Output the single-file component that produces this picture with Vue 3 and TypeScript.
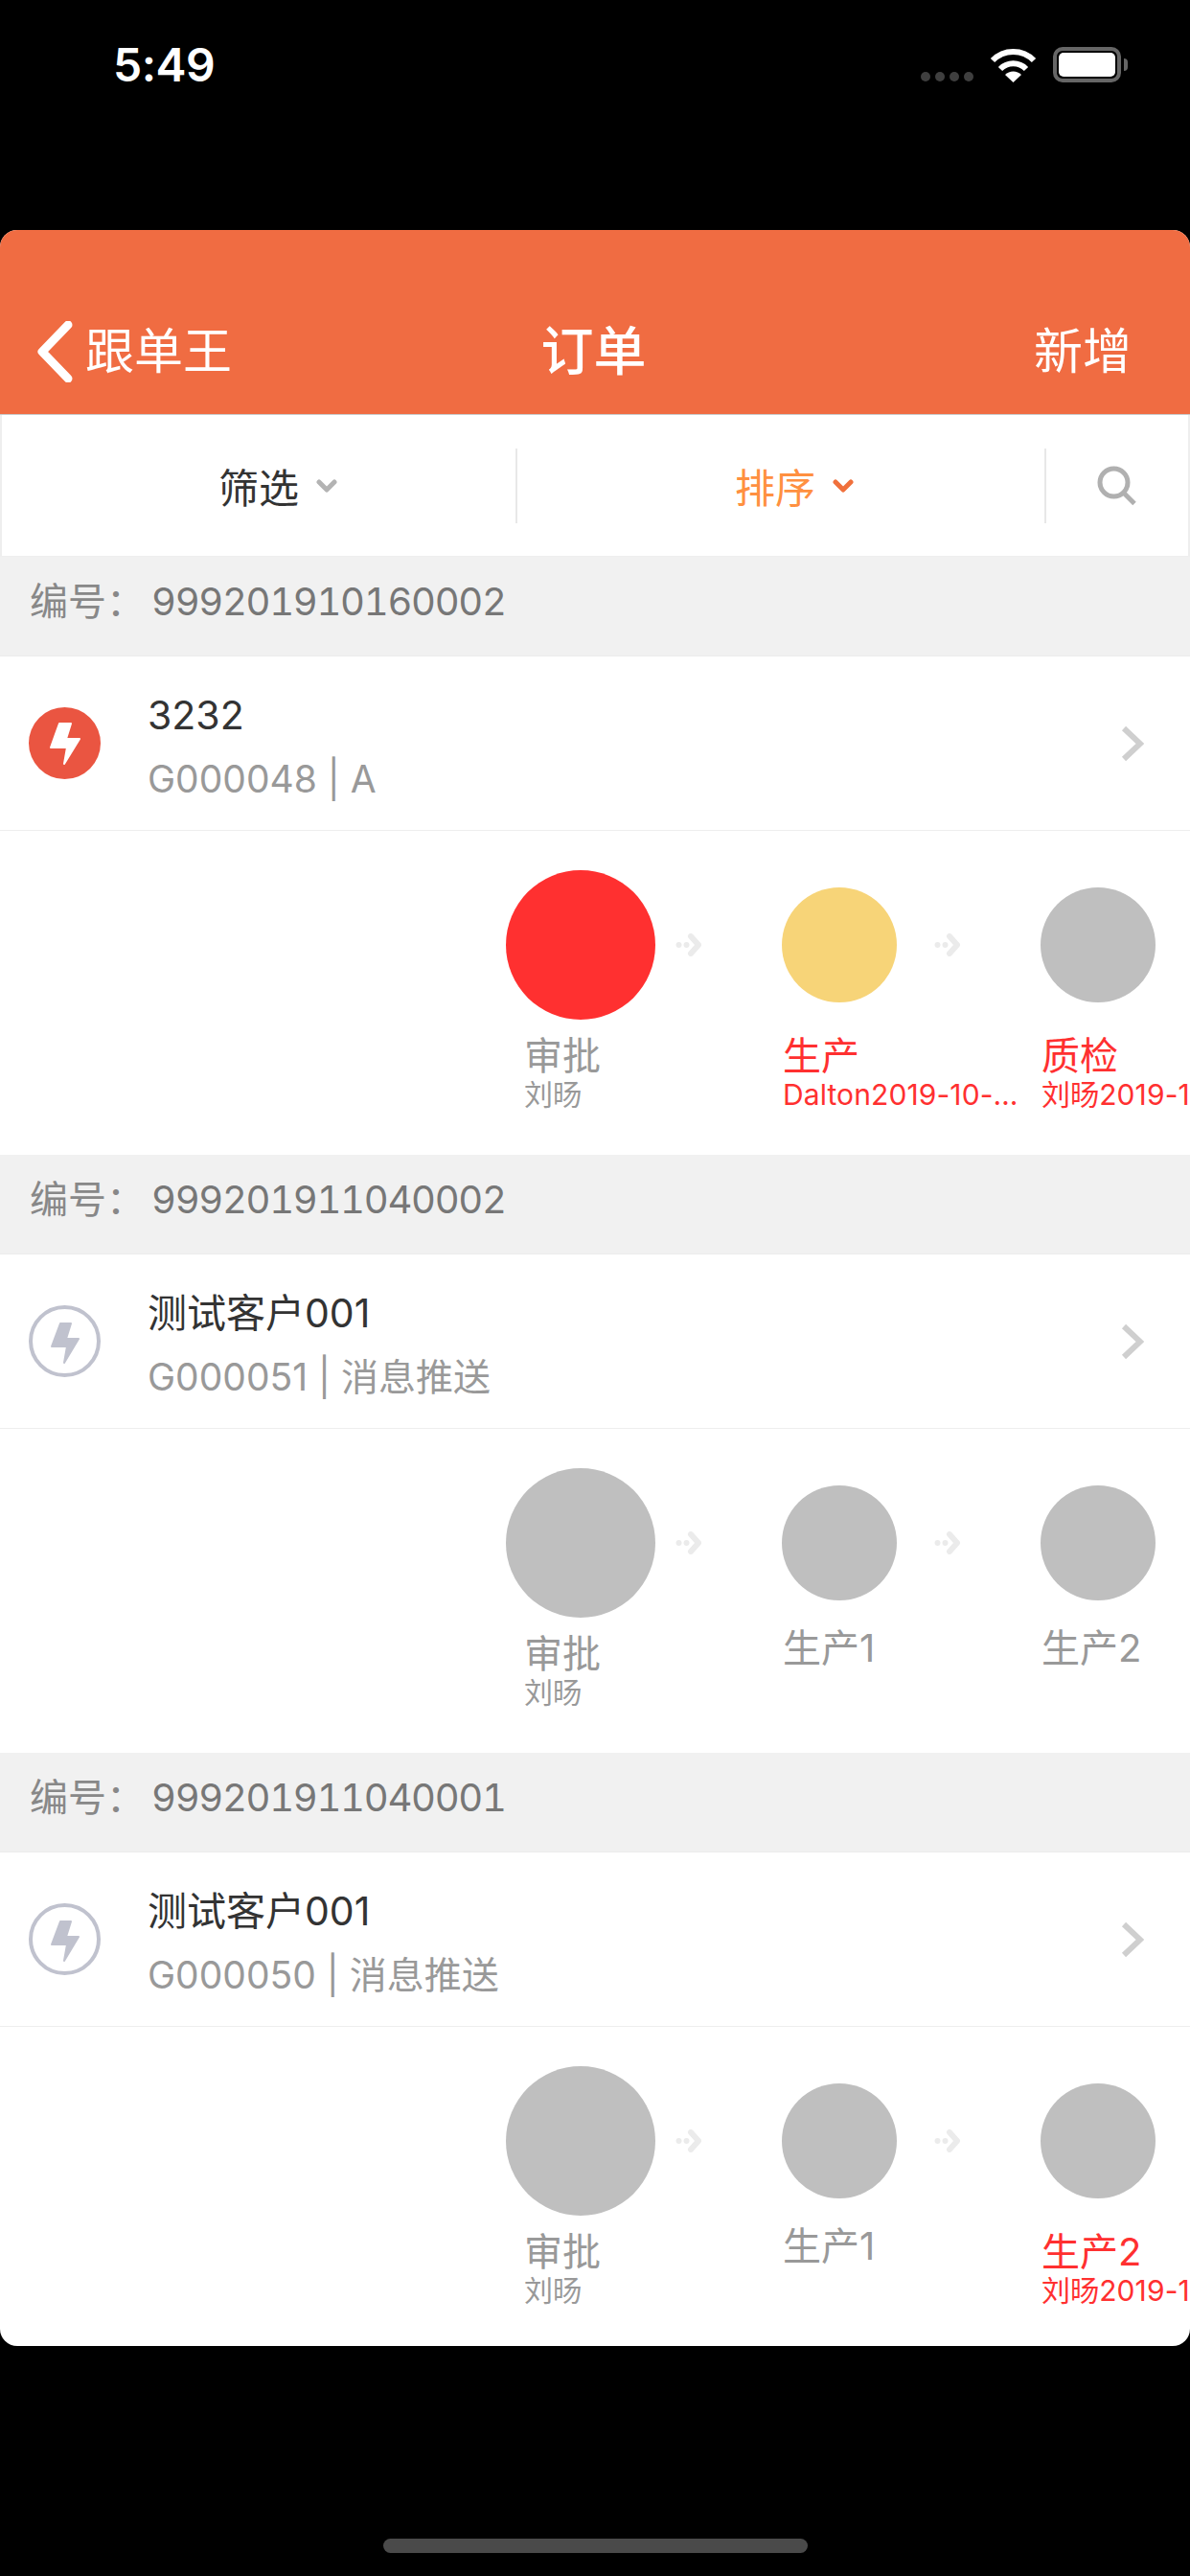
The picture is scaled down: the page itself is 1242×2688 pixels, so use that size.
<script setup lang="ts">
interface Step {
  name: string;
  who?: string;
  color: 'red' | 'yellow' | 'gray';
  big?: boolean;
  alert?: boolean;
}

interface Order {
  no: string;
  title: string;
  sub: string;
  urgent: boolean;
  steps: Step[];
}

const orders: Order[] = [
  {
    no: '999201910160002',
    title: '3232',
    sub: 'G000048 | A',
    urgent: true,
    steps: [
      { name: '审批', who: '刘旸', color: 'red', big: true },
      { name: '生产', who: 'Dalton2019-10-16', color: 'yellow', alert: true },
      { name: '质检', who: '刘旸2019-10-16', color: 'gray', alert: true },
    ],
  },
  {
    no: '999201911040002',
    title: '测试客户001',
    sub: 'G000051 | 消息推送',
    urgent: false,
    steps: [
      { name: '审批', who: '刘旸', color: 'gray', big: true },
      { name: '生产1', color: 'gray' },
      { name: '生产2', color: 'gray' },
    ],
  },
  {
    no: '999201911040001',
    title: '测试客户001',
    sub: 'G000050 | 消息推送',
    urgent: false,
    steps: [
      { name: '审批', who: '刘旸', color: 'gray', big: true },
      { name: '生产1', color: 'gray' },
      { name: '生产2', who: '刘旸2019-11-04', color: 'gray', alert: true },
    ],
  },
];
</script>

<template>
  <div class="screen">
    <div class="status">
      <span class="time">5:49</span>
      <div class="status-icons">
        <div class="signal"><i></i><i></i><i></i><i></i></div>
        <svg class="wifi" width="49" height="37" viewBox="0 0 49 37">
          <path d="M3 14 A30 30 0 0 1 46 14" fill="none" stroke="#fff" stroke-width="6" />
          <path d="M11 23 A19 19 0 0 1 38 23" fill="none" stroke="#fff" stroke-width="6" />
          <path d="M24.5 37 L16 29 A12 12 0 0 1 33 29 Z" fill="#fff" />
        </svg>
        <div class="battery"><div class="battery-fill"></div></div>
        <div class="battery-tip"></div>
      </div>
    </div>

    <div class="card">
      <div class="nav">
        <div class="nav-back">
          <svg width="38" height="64" viewBox="0 0 38 64">
            <path d="M33 4 L6 32 L33 60" fill="none" stroke="#fff" stroke-width="9" stroke-linecap="round" stroke-linejoin="round" />
          </svg>
          <span>跟单王</span>
        </div>
        <div class="nav-title">订单</div>
        <div class="nav-add">新增</div>
      </div>

      <div class="filters">
        <div class="filter filter-a">
          <span>筛选</span>
          <svg width="22" height="14" viewBox="0 0 22 14">
            <path d="M3 3 L11 11 L19 3" fill="none" stroke="#b3b3b3" stroke-width="5" stroke-linecap="round" stroke-linejoin="round" />
          </svg>
        </div>
        <div class="filter filter-b active">
          <span>排序</span>
          <svg width="22" height="14" viewBox="0 0 22 14">
            <path d="M3 3 L11 11 L19 3" fill="none" stroke="#f0703c" stroke-width="5" stroke-linecap="round" stroke-linejoin="round" />
          </svg>
        </div>
        <div class="filter filter-c">
          <svg width="42" height="42" viewBox="0 0 42 42">
            <circle cx="17.5" cy="17.5" r="14.5" fill="none" stroke="#b0b0b0" stroke-width="5" />
            <path d="M27.5 28 L39 39.5" fill="none" stroke="#b0b0b0" stroke-width="5" />
          </svg>
        </div>
      </div>

      <section v-for="order in orders" :key="order.no" class="order">
        <div class="order-no"><span class="no-label">编号：</span><span>{{ order.no }}</span></div>
        <div class="order-row">
          <svg class="bolt" width="75" height="75" viewBox="0 0 75 75">
            <template v-if="order.urgent">
              <circle cx="37.5" cy="37.5" r="37.5" fill="#ea5541" />
              <path d="M32 17 H44 L39 33 H53 L37 59 L40 42 H23 Z" fill="#fff" stroke="#fff" stroke-width="2" stroke-linejoin="round" />
            </template>
            <template v-else>
              <circle cx="37.5" cy="37.5" r="35.5" fill="none" stroke="#c0c2ce" stroke-width="4" />
              <path d="M33 19 H44 L39 35 H52 L37 60 L40 43 H24 Z" fill="#c0c2ce" stroke="#c0c2ce" stroke-width="2" stroke-linejoin="round" />
            </template>
          </svg>
          <div class="order-info">
            <div class="order-title">{{ order.title }}</div>
            <div class="order-sub">{{ order.sub }}</div>
          </div>
          <svg class="row-arrow" width="24" height="38" viewBox="0 0 24 38">
            <path d="M3 3 L20 19 L3 35" fill="none" stroke="#cfcfcf" stroke-width="6" />
          </svg>
        </div>
        <div class="steps">
          <template v-for="(step, i) in order.steps" :key="i">
            <svg v-if="i > 0" class="step-arrow" width="27" height="24" viewBox="0 0 27 24">
              <circle cx="3.5" cy="12" r="3" fill="#ebebeb" />
              <circle cx="11.5" cy="12" r="3" fill="#ebebeb" />
              <path d="M16 3 L24 12 L16 21" fill="none" stroke="#ebebeb" stroke-width="6" stroke-linecap="round" stroke-linejoin="round" />
            </svg>
            <div class="step">
              <div class="dot-wrap">
                <div class="dot" :class="[step.color, { big: step.big }]"></div>
              </div>
              <div class="step-text" :class="{ alert: step.alert, solo: !step.who }">
                <div class="step-name">{{ step.name }}</div>
                <div v-if="step.who" class="step-who">{{ step.who }}</div>
              </div>
            </div>
          </template>
        </div>
      </section>
    </div>

    <div class="home-bar"></div>
  </div>
</template>

<style scoped>
.screen {
  width: 1242px;
  height: 2688px;
  background: #000;
  overflow: hidden;
  font-family: Inter, "Noto Sans CJK SC", sans-serif;
}
.status {
  height: 240px;
  box-sizing: border-box;
  padding: 49px 65px 0 118px;
  display: flex;
  justify-content: space-between;
  align-items: flex-start;
  color: #fff;
}
.time {
  font-size: 48px;
  font-weight: 600;
  line-height: 38px;
  letter-spacing: -0.5px;
}
.status-icons {
  display: flex;
  align-items: flex-start;
}
.signal {
  display: flex;
  gap: 5px;
  margin: 26px 17px 0 0;
}
.signal i {
  width: 10px;
  height: 10px;
  border-radius: 5px;
  background: #3f3f3f;
}
.battery {
  width: 71px;
  height: 37px;
  box-sizing: border-box;
  margin-left: 17px;
  padding: 2px;
  border: 4px solid #666;
  border-radius: 10px;
}
.battery-fill {
  height: 100%;
  background: #fff;
  border-radius: 5px;
}
.battery-tip {
  width: 4px;
  height: 13px;
  margin: 12px 0 0 3px;
  background: #666;
  border-radius: 0 4px 4px 0;
}

.card {
  height: 2208px;
  background: #fff;
  border-radius: 18px;
  overflow: hidden;
}
.nav {
  height: 193px;
  box-sizing: border-box;
  padding: 95px 61px 0 38px;
  display: flex;
  justify-content: space-between;
  background: #f06c42;
  border-bottom: 1px solid #c9c9c9;
  color: #fff;
  font-size: 51px;
  line-height: 64px;
}
.nav-back {
  display: flex;
  align-items: center;
  gap: 13px;
  height: 64px;
}
.nav-title {
  font-size: 55px;
  font-weight: 500;
  margin-left: -82px;
  margin-top: -1px;
}

.filters {
  height: 148px;
  box-sizing: border-box;
  display: flex;
  align-items: center;
  border-left: 2px solid #eee;
  border-right: 2px solid #eee;
  border-bottom: 1px solid #eee;
  font-size: 42px;
  color: #333;
}
.filter {
  height: 78px;
  display: flex;
  align-items: center;
  justify-content: center;
  gap: 18px;
}
.filter svg {
  flex: none;
}
.filter-a {
  width: 538px;
  box-sizing: border-box;
  padding-left: 40px;
  border-right: 2px solid #e8e8e8;
}
.filter-b {
  width: 552px;
  box-sizing: border-box;
  padding-left: 28px;
  border-right: 2px solid #e8e8e8;
}
.filter-c {
  flex: 1;
}
.active {
  color: #ff9040;
}

.order-no {
  height: 104px;
  box-sizing: border-box;
  padding: 23px 0 0 31px;
  background: #f1f1f1;
  border-bottom: 1px solid #ececec;
  font-size: 40px;
  line-height: 48px;
  color: #777;
  display: flex;
  font-variant-numeric: tabular-nums;
  letter-spacing: -1.3px;
}
.no-label {
  width: 127px;
  color: #888;
  letter-spacing: 0;
}
.order-row {
  height: 182px;
  box-sizing: border-box;
  padding: 0 48px 0 30px;
  display: flex;
  align-items: center;
  border-bottom: 1px solid #eee;
}
.bolt {
  flex: none;
}
.order-info {
  flex: 1;
  margin-left: 49px;
  padding-top: 6px;
}
.order-title {
  font-size: 41px;
  line-height: 50px;
  color: #333;
}
.order-sub {
  margin-top: 18px;
  font-size: 39px;
  line-height: 48px;
  color: #999;
}
.steps {
  height: 338px;
  box-sizing: border-box;
  padding: 41px 0 0 507px;
  display: flex;
  align-items: flex-start;
}
.step {
  flex: none;
  width: 198px;
}
.step-arrow {
  flex: none;
  margin: 66px 45px 0 0;
}
.dot-wrap {
  height: 156px;
  display: flex;
  align-items: center;
  justify-content: center;
}
.dot {
  width: 120px;
  height: 120px;
  border-radius: 50%;
}
.dot.big {
  width: 156px;
  height: 156px;
}
.red {
  background: #ff3030;
}
.yellow {
  background: #f7d478;
}
.gray {
  background: #bfbfbf;
}
.step-text {
  width: 250px;
  margin: 15px 0 0 40px;
  color: #999;
}
.step-text.solo {
  margin-top: 9px;
}
.step-text.alert {
  color: #ff3030;
}
.step-name {
  font-size: 40px;
  line-height: 45px;
}
.step-who {
  font-size: 30px;
  line-height: 36px;
  letter-spacing: 0.1px;
  white-space: nowrap;
  overflow: hidden;
  text-overflow: ellipsis;
}
.home-bar {
  width: 443px;
  height: 15px;
  margin: 201px auto 0;
  background: #4a4a4a;
  border-radius: 8px;
}
</style>

<style>
html,
body {
  background: #000;
}
</style>
